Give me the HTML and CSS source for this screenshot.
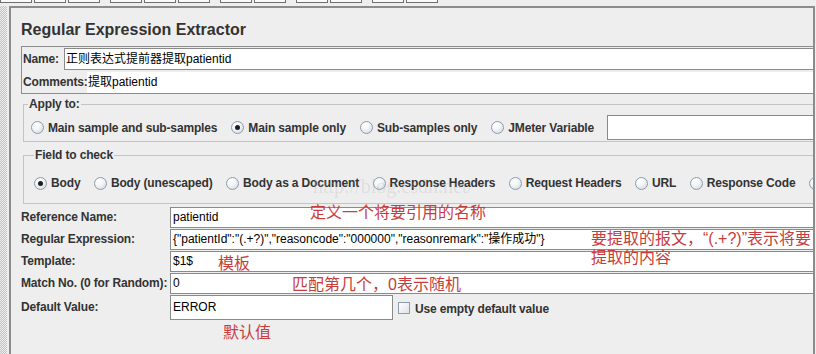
FILE: index.html
```html
<!DOCTYPE html>
<html lang="zh">
<head>
    <meta charset="UTF-8">
    <title>Regular Expression Extractor</title>
    <link rel="stylesheet" href="styles.css">
</head>
<body>
    <!-- toolbar bottom edge -->
    <div class="topbar">
        <div class="tgroup"><span class="tab"></span><span class="tab"></span><span class="tab"></span></div>
        <div class="tgroup"><span class="tab"></span><span class="tab"></span><span class="tab"></span></div>
        <div class="tgroup"><span class="tab"></span><span class="tab"></span></div>
        <div class="tgroup"><span class="tab"></span><span class="tab"></span></div>
        <div class="tgroup"><span class="tab"></span><span class="tab"></span></div>
    </div>

    <div class="frame">
        <div class="splitter"></div>
        <div class="panel">
            <h1 class="title">Regular Expression Extractor</h1>

            <div class="namebox">
                <div class="nrow">
                    <span class="lbl name-lbl">Name:</span>
                    <div class="field">正则表达式提前器提取patientid</div>
                </div>
                <div class="nrow crow">
                    <span class="lbl comm-lbl">Comments:</span>
                    <div class="field flat">提取patientid</div>
                </div>
            </div>

            <fieldset class="group apply">
                <legend>Apply to:</legend>
                <div class="radios">
                    <span class="radio"><i class="dot"></i>Main sample and sub-samples</span>
                    <span class="radio"><i class="dot on"></i>Main sample only</span>
                    <span class="radio"><i class="dot"></i>Sub-samples only</span>
                    <span class="radio last"><i class="dot"></i>JMeter Variable</span>
                    <div class="field varfield"></div>
                </div>
            </fieldset>

            <fieldset class="group check">
                <legend>Field to check</legend>
                <div class="radios">
                    <span class="radio"><i class="dot on"></i>Body</span>
                    <span class="radio"><i class="dot"></i>Body (unescaped)</span>
                    <span class="radio"><i class="dot"></i>Body as a Document</span>
                    <span class="radio"><i class="dot"></i>Response Headers</span>
                    <span class="radio"><i class="dot"></i>Request Headers</span>
                    <span class="radio"><i class="dot"></i>URL</span>
                    <span class="radio"><i class="dot"></i>Response Code</span>
                    <span class="radio"><i class="dot"></i>Response Message</span>
                </div>
            </fieldset>

            <div class="form">
                <span class="lbl">Reference Name:</span>
                <div class="field">patientid</div>
                <span class="lbl">Regular Expression:</span>
                <div class="field">{"patientId":"(.+?)","reasoncode":"000000","reasonremark":"操作成功"}</div>
                <span class="lbl">Template:</span>
                <div class="field">$1$</div>
                <span class="lbl">Match No. (0 for Random):</span>
                <div class="field">0</div>
                <span class="lbl tall">Default Value:</span>
                <div class="dvrow">
                    <div class="field short">ERROR</div>
                    <span class="check-box"></span>
                    <span class="cblabel">Use empty default value</span>
                </div>
            </div>
        </div>
    </div>

    <!-- 截图上的红色批注 -->
    <div class="watermark">http://blog.csdn.net/</div>
    <div class="note n1">定义一个将要引用的名称</div>
    <div class="note n2">要提取的报文，“(.+?)”表示将要<br>提取的内容</div>
    <div class="note n3">模板</div>
    <div class="note n4">匹配第几个，0表示随机</div>
    <div class="note n5">默认值</div>
</body>
</html>
```

FILE: styles.css
```css
* {
    box-sizing: border-box;
}
html, body {
    margin: 0;
}
body {
    position: relative;
    width: 816px;
    height: 354px;
    overflow: hidden;
    background: #eeeeee;
    font-family: "Liberation Sans", Arial, "Noto Sans CJK SC", sans-serif;
    font-size: 12px;
    color: #333;
}

/* toolbar buttons cut off at the top */
.topbar {
    display: flex;
    gap: 10px;
    height: 6px;
}
.tgroup {
    display: flex;
    gap: 2px;
}
.tab {
    width: 32px;
    height: 3px;
    border: 1px solid #6f6f6f;
    border-top: 0;
    background: #fafafa;
}

.frame {
    display: flex;
    height: 348px;
}
.splitter {
    width: 9px;
    padding-right: 2px;
    background: repeating-conic-gradient(#c2c2c2 0 25%, #eeeeee 0 50%) 0 0 / 2px 2px;
    background-clip: content-box;
}
.panel {
    flex: 1;
    min-width: 0;
    margin-right: 1px;
    border: 2px solid #8c8c8c;
    border-bottom: 0;
    overflow: hidden;
    background: #eeeeee;
}

.title {
    margin: 0;
    height: 38px;
    padding: 13px 0 0 10px;
    font-size: 16px;
    line-height: 18px;
    font-weight: bold;
    color: #333;
}

.lbl {
    font-weight: bold;
    letter-spacing: -0.15px;
    white-space: nowrap;
}
.field {
    background: #fff;
    border: 1px solid #8a8a8a;
    border-right: 0;
    color: #000;
    white-space: nowrap;
    overflow: hidden;
}

/* name + comments */
.namebox {
    margin-left: 10px;
    border: 1px solid #8d8d8d;
    border-right: 0;
}
.nrow {
    display: flex;
    align-items: center;
    height: 23px;
    padding-left: 1px;
}
.name-lbl {
    width: 41px;
}
.comm-lbl {
    width: 64px;
}
.nrow .field {
    flex: 1;
    align-self: flex-end;
    height: 22px;
    padding: 0 1px;
    line-height: 20px;
    font-size: 12px;
}
.nrow .flat {
    height: 21px;
    border: 0;
    line-height: 21px;
}

/* titled groups */
.group {
    min-width: 0;
    margin: 3px 0 0 12px;
    padding: 4px 0 1px 4px;
    border: 1px solid #c4c4c4;
    border-right: 0;
}
.group legend {
    padding: 0 1px;
    line-height: 14px;
    font-weight: bold;
    letter-spacing: -0.15px;
    color: #333;
}
.radios {
    display: flex;
    align-items: center;
    white-space: nowrap;
}
.radio {
    display: flex;
    align-items: center;
    font-weight: bold;
    letter-spacing: -0.15px;
}
.apply .radios {
    height: 25px;
    padding-left: 3px;
}
.apply .radio {
    margin-right: 14px;
}
.apply .radio.last {
    margin-right: 0;
}
.check {
    margin-top: 6px;
    padding: 12px 0 11px 10px;
}
.check .radios {
    height: 18px;
}
.check .radio {
    margin-right: 13.5px;
}
.dot {
    position: relative;
    width: 13px;
    height: 13px;
    margin-right: 4px;
    border: 1px solid #8e9cad;
    border-radius: 50%;
    background: radial-gradient(circle at 35% 30%, #ffffff 0, #f3f5f7 40%, #cdd4dc 100%);
}
.dot.on::after {
    content: "";
    position: absolute;
    left: 3px;
    top: 3px;
    width: 5px;
    height: 5px;
    border-radius: 50%;
    background: #1e1e1e;
}
.varfield {
    flex: 1;
    height: 25px;
    margin-left: 13px;
}

/* label / value rows */
.form {
    display: grid;
    grid-template-columns: 149px 1fr;
    row-gap: 1px;
    margin: 3px 0 0 10px;
}
.form .lbl {
    line-height: 21px;
}
.form .lbl.tall {
    line-height: 25px;
}
.form .field {
    height: 21px;
    padding: 0 2px;
    line-height: 19px;
}
.dvrow {
    display: flex;
    align-items: center;
}
.form .field.short {
    width: 223px;
    height: 25px;
    line-height: 23px;
    border-right: 1px solid #8a8a8a;
}
.check-box {
    width: 12px;
    height: 12px;
    margin: 1px 5px 0 5px;
    border: 1px solid #8d9cad;
    background: linear-gradient(135deg, #ffffff, #dde2e8);
}
.cblabel {
    font-weight: bold;
    letter-spacing: -0.15px;
    margin-top: 2px;
}

/* overlays drawn on the screenshot */
.watermark {
    position: absolute;
    left: 313px;
    top: 175px;
    font-family: "Liberation Serif", serif;
    font-size: 20px;
    color: rgba(175, 175, 175, 0.25);
}
.note {
    position: absolute;
    font-family: "Liberation Sans", "Noto Sans CJK SC", sans-serif;
    font-size: 16px;
    line-height: 19px;
    color: #c83c3c;
    white-space: nowrap;
}
.n1 { left: 310px; top: 203px; }
.n2 { left: 591px; top: 229px; }
.n3 { left: 218px; top: 254px; }
.n4 { left: 292px; top: 275px; }
.n5 { left: 223px; top: 323px; }
```
